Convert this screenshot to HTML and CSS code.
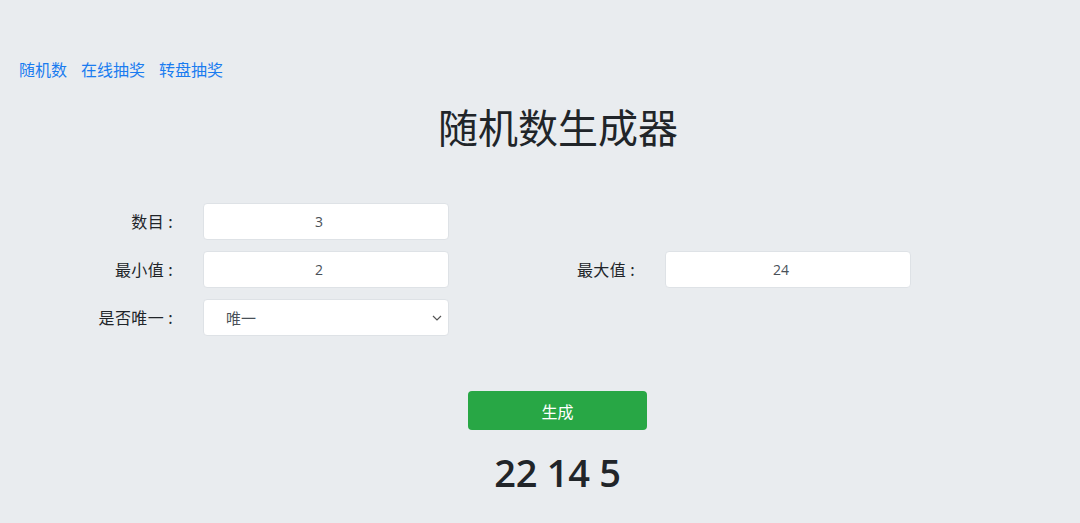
FILE: index.html
```html
<!DOCTYPE html>
<html lang="zh-CN">
<head>
<meta charset="utf-8">
<title>随机数生成器</title>
<link rel="stylesheet" href="styles.css">
</head>
<body>
<nav class="nav">
  <a href="#">随机数</a>
  <a href="#">在线抽奖</a>
  <a href="#">转盘抽奖</a>
</nav>
<h1 class="title">随机数生成器</h1>
<form class="form">
  <label class="label">数目 :</label>
  <input class="field" type="text" value="3">
  <span></span><span></span>
  <label class="label">最小值 :</label>
  <input class="field" type="text" value="2">
  <label class="label">最大值 :</label>
  <input class="field" type="text" value="24">
  <label class="label">是否唯一 :</label>
  <div class="select">
    <span>唯一</span>
    <svg width="10" height="6" viewBox="0 0 10 6"><path d="M1 1 L5 5 L9 1" fill="none" stroke="#555" stroke-width="1.2"/></svg>
  </div>
</form>
<div class="actions">
  <button class="btn" type="button">生成</button>
  <div class="result">22 14 5</div>
</div>
</body>
</html>
```
FILE: styles.css
```css
html, body {
  margin: 0;
  padding: 0;
}
body {
  background: #e9ecef;
  font-family: "Noto Sans CJK SC", "Noto Sans", sans-serif;
  color: #212529;
  width: 1080px;
  height: 523px;
  overflow: hidden;
}
.nav {
  display: flex;
  gap: 14px;
  padding: 57px 0 0 19px;
  height: 24px;
}
.nav a {
  color: #1a7cf0;
  text-decoration: none;
  font-size: 16px;
  line-height: 24px;
}
.title {
  margin: 21px 0 0 36px;
  text-align: center;
  font-weight: 400;
  font-size: 40px;
  line-height: 48px;
  color: #212529;
}
.form {
  display: grid;
  grid-template-columns: 175px 246px 160px 246px;
  column-gap: 28px;
  row-gap: 11px;
  margin: 53px 0 0 0;
}
.label {
  text-align: right;
  font-size: 16px;
  letter-spacing: 0.4px;
  line-height: 37px;
  height: 37px;
  padding-right: 2px;
  color: #212529;
}
.field {
  box-sizing: border-box;
  height: 37px;
  width: 246px;
  border: 1px solid #dee2e6;
  border-radius: 4px;
  background: #fff;
  text-align: center;
  font-family: "Open Sans", "Noto Sans", sans-serif;
  font-size: 14px;
  color: #495057;
  outline: none;
  padding: 0 14px 0 0;
  margin: 0;
}
.select {
  box-sizing: border-box;
  height: 37px;
  width: 246px;
  border: 1px solid #dee2e6;
  border-radius: 4px;
  background: #fff;
  display: flex;
  align-items: center;
  justify-content: space-between;
  padding: 0 6px 0 22px;
  font-size: 15px;
  color: #495057;
}
.actions {
  display: flex;
  flex-direction: column;
  align-items: center;
  margin: 55px 0 0 35px;
}
.btn {
  width: 179px;
  height: 39px;
  background: #28a745;
  border: none;
  border-radius: 4px;
  color: #fff;
  font-family: "Noto Sans CJK SC", sans-serif;
  font-size: 16px;
  padding: 0;
}
.result {
  margin-top: 19px;
  font-family: "Open Sans", "Noto Sans", sans-serif;
  font-size: 38px;
  font-weight: 600;
  line-height: 46px;
  color: #212529;
  letter-spacing: -0.3px;
}
```
